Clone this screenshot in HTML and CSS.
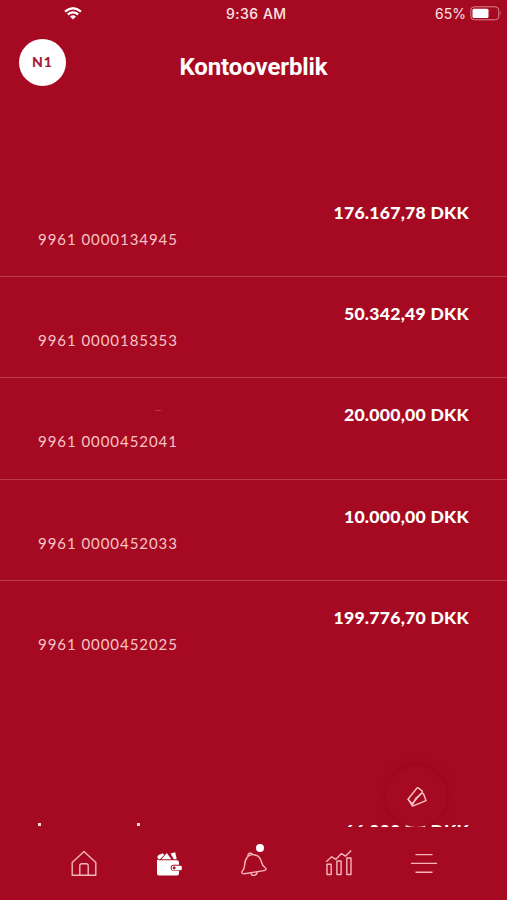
FILE: index.html
```
<!DOCTYPE html>
<html lang="da">
<head>
    <meta charset="UTF-8">
    <meta name="viewport" content="width=device-width, initial-scale=1.0">
    <title>Kontooverblik</title>
    <link rel="stylesheet" href="styles.css">
</head>
<body>
    <div class="app">
        <!-- Status bar -->
        <div class="status">
            <svg class="wifi" width="18" height="13" viewBox="0 0 18 13" fill="none" stroke="#fff" stroke-width="2.3">
                <path d="M1 4.6Q9-2 17 4.6M3.8 7.5q5.2-4.2 10.4 0"/>
                <path d="M6 9.6q3-2.5 6 0l-3 3z" fill="#fff" stroke="none"/>
            </svg>
            <span class="time">9:36 AM</span>
            <div class="power">
                <span>65%</span>
                <svg width="32" height="15" viewBox="0 0 32 15">
                    <rect x=".8" y=".8" width="28" height="13" rx="3.5" fill="none" stroke="#d9838c" stroke-width="1"/>
                    <rect x="2.5" y="2.8" width="16" height="9.2" rx="1.5" fill="#fff"/>
                    <path d="M30 5q1.6 2.3 0 4.6z" fill="#d9838c"/>
                </svg>
            </div>
        </div>

        <header class="header">
            <div class="avatar">N1</div>
            <h1>Kontooverblik</h1>
        </header>

        <!-- Accounts -->
        <main class="accounts">
            <div class="account">
                <div class="amount">176.167,78 DKK</div>
                <div class="number">9961 0000134945</div>
            </div>
            <div class="account">
                <div class="amount">50.342,49 DKK</div>
                <div class="number">9961 0000185353</div>
            </div>
            <div class="account">
                <div class="amount">20.000,00 DKK</div>
                <div class="number">9961 0000452041</div>
                <i class="mark"></i>
            </div>
            <div class="account">
                <div class="amount">10.000,00 DKK</div>
                <div class="number">9961 0000452033</div>
            </div>
            <div class="account">
                <div class="amount">199.776,70 DKK</div>
                <div class="number">9961 0000452025</div>
            </div>
            <div class="account next">
                <div class="dots"><i></i><i></i></div>
                <div class="amount">66.000,77 DKK</div>
            </div>
        </main>

        <button class="fab" aria-label="Kort">
            <svg width="20" height="20" viewBox="0 0 20 20" fill="none" stroke="#f8c4c7" stroke-width="1.4" stroke-linejoin="round">
                <path d="M1 12.2L9.8 1.2q.8-.8 1.7-.1l3.4 2.7q.8.8.2 1.6L5.2 16.8z"/>
                <path d="M15.2 6.2q1.2.2 1.6 1.2l2.2 6.2L5.6 19.2 1 12.2M14.8 6.2L8.8 11.4 5.4 17.6"/>
            </svg>
        </button>

        <!-- Tab bar -->
        <nav class="tabs">
            <a>
                <svg width="26" height="28" viewBox="0 0 26 28">
                    <path d="M1.2 25.2V12.4L13 1.6l11.8 10.8v12.8zM8.8 25.2v-9.4q0-2 2-2h4.4q2 0 2 2v9.4"/>
                </svg>
            </a>
            <a>
                <svg class="wallet" width="26" height="28" viewBox="0 0 26 28">
                    <path fill="#fff" d="M1 9.6q1 .6 2.4.6h17.2q2.4 0 2.4 2v2.6h-5.5q-2.8 0-2.8 3t2.8 3H23v2.8q0 2-2 2H3q-2 0-2-2z"/>
                    <path fill="#fff" d="M1.2 7.2L2.4 5l4.8-1.8.8 2-4 4H2.6zM10.8 3l4.6 6.2H5.4zM14.6 3.4l4.6-1.2 1.5 7h-3z"/>
                    <rect x="15.8" y="15.7" width="10" height="4.6" rx="1.4" fill="#fff"/>
                    <circle cx="18.2" cy="18" r="1.4" fill="#a60a22"/>
                </svg>
            </a>
            <a>
                <svg class="bell" width="26" height="28" viewBox="0 0 26 28">
                    <path d="M6.8 6.6C9.5 3.7 16.4 3.9 19 8.4c2.5 4.3.9 6.3 5 9.1 1.8 1.4 1.1 2.8-1.1 3.1L3.3 23.8c-2.7.4-3.4-1.8-1.4-3.5C5 17 2 11.5 6.8 6.6z"/>
                    <path d="M7.1 6.1Q6.7 3 9.2 3.3q2.1-.1 2.6 1.5M9.8 23.2q.8 2.6 3.5 2.1 2.6-.4 2.9-3.1"/>
                </svg>
                <i class="badge"></i>
            </a>
            <a>
                <svg width="28" height="28" viewBox="0 0 28 28">
                    <path d="M2 14.2h4.2v10.3H2zM11.9 11h4.2v13.5h-4.2zM21.8 8h4.2v16.5h-4.2zM1.2 11.8l5.5-5 4.2 2.5 5.5-5.7 4 2.6L26.2.5"/>
                </svg>
            </a>
            <a>
                <svg width="26" height="28" viewBox="0 0 26 28">
                    <path d="M4.5 4.6h17M0 13.4h26M4.5 22.2h17"/>
                </svg>
            </a>
        </nav>
    </div>
</body>
</html>
```
FILE: styles.css
```
* {
    margin: 0;
    padding: 0;
    box-sizing: border-box;
}

body {
    background-color: #a60a22;
    color: #fff;
    font-family: Lato, sans-serif;
}

.app {
    position: relative;
    display: flex;
    flex-direction: column;
    height: 900px;
    overflow: hidden;
}

.status {
    display: grid;
    grid-template-columns: 1fr auto 1fr;
    align-items: center;
    height: 27px;
    padding: 0 5px 0 64px;
    font-family: Inter, sans-serif;
    font-size: 14px;
    color: #fde4e4;
}

.time {
    width: 62px;
    margin-left: -52px;
    font-weight: 500;
    letter-spacing: 0.5px;
    white-space: nowrap;
}

.power {
    display: flex;
    align-items: center;
    justify-content: flex-end;
    gap: 4px;
}

.header {
    display: grid;
    grid-template-columns: 47px 1fr 47px;
    align-items: center;
    height: 71px;
    padding: 0 19px;
}

.avatar {
    width: 47px;
    height: 47px;
    border-radius: 50%;
    background-color: #fff;
    color: #a01d36;
    font-size: 14px;
    font-weight: 900;
    line-height: 46px;
    letter-spacing: 1px;
    text-align: center;
}

h1 {
    padding-top: 9px;
    font-family: Roboto, sans-serif;
    font-size: 24px;
    font-weight: 700;
    text-align: center;
    letter-spacing: -0.1px;
}

.accounts {
    flex: 1;
    padding-top: 77.5px;
    overflow: hidden;
}

.account {
    position: relative;
    height: 101.4px;
    padding: 26px 38px 0 38px;
    border-bottom: 1.5px solid #b93a4d;
}

.account:nth-child(5) {
    border-bottom: none;
}

.amount {
    text-align: right;
    font-size: 17.6px;
    font-weight: 900;
    line-height: 22px;
    letter-spacing: 0.25px;
}

.number {
    margin-top: 5px;
    color: #f8c4c7;
    font-size: 15px;
    line-height: 20px;
    letter-spacing: 0.95px;
}

.mark {
    position: absolute;
    left: 155px;
    top: 32px;
    width: 6px;
    height: 1px;
    background-color: #bd3549;
}

.next {
    display: flex;
    justify-content: space-between;
    margin-top: 111.5px;
    border: none;
}

.dots {
    display: flex;
    gap: 96px;
    padding-top: 3px;
}

.dots i {
    width: 3px;
    height: 3px;
    background-color: #ffd9d9;
}

.fab {
    position: absolute;
    left: 386px;
    top: 766px;
    width: 61px;
    height: 61px;
    border: none;
    border-radius: 50%;
    background-color: #a60a22;
    box-shadow: 0 0 8px rgba(110, 0, 25, 0.35);
}

.fab svg {
    display: block;
    margin: auto;
}

.tabs {
    position: relative;
    display: flex;
    height: 73px;
    padding: 0 41px 0 42px;
    background-color: #a60a22;
}

.tabs a {
    position: relative;
    flex: 1;
    display: flex;
    justify-content: center;
    padding-top: 23px;
}

.tabs svg {
    fill: none;
    stroke: #f5b4ba;
    stroke-width: 1.4;
    stroke-linejoin: round;
}

.tabs .wallet {
    stroke: none;
}

.badge {
    position: absolute;
    left: 44px;
    top: 17px;
    width: 8px;
    height: 8px;
    border-radius: 50%;
    background-color: #fff;
}
```
